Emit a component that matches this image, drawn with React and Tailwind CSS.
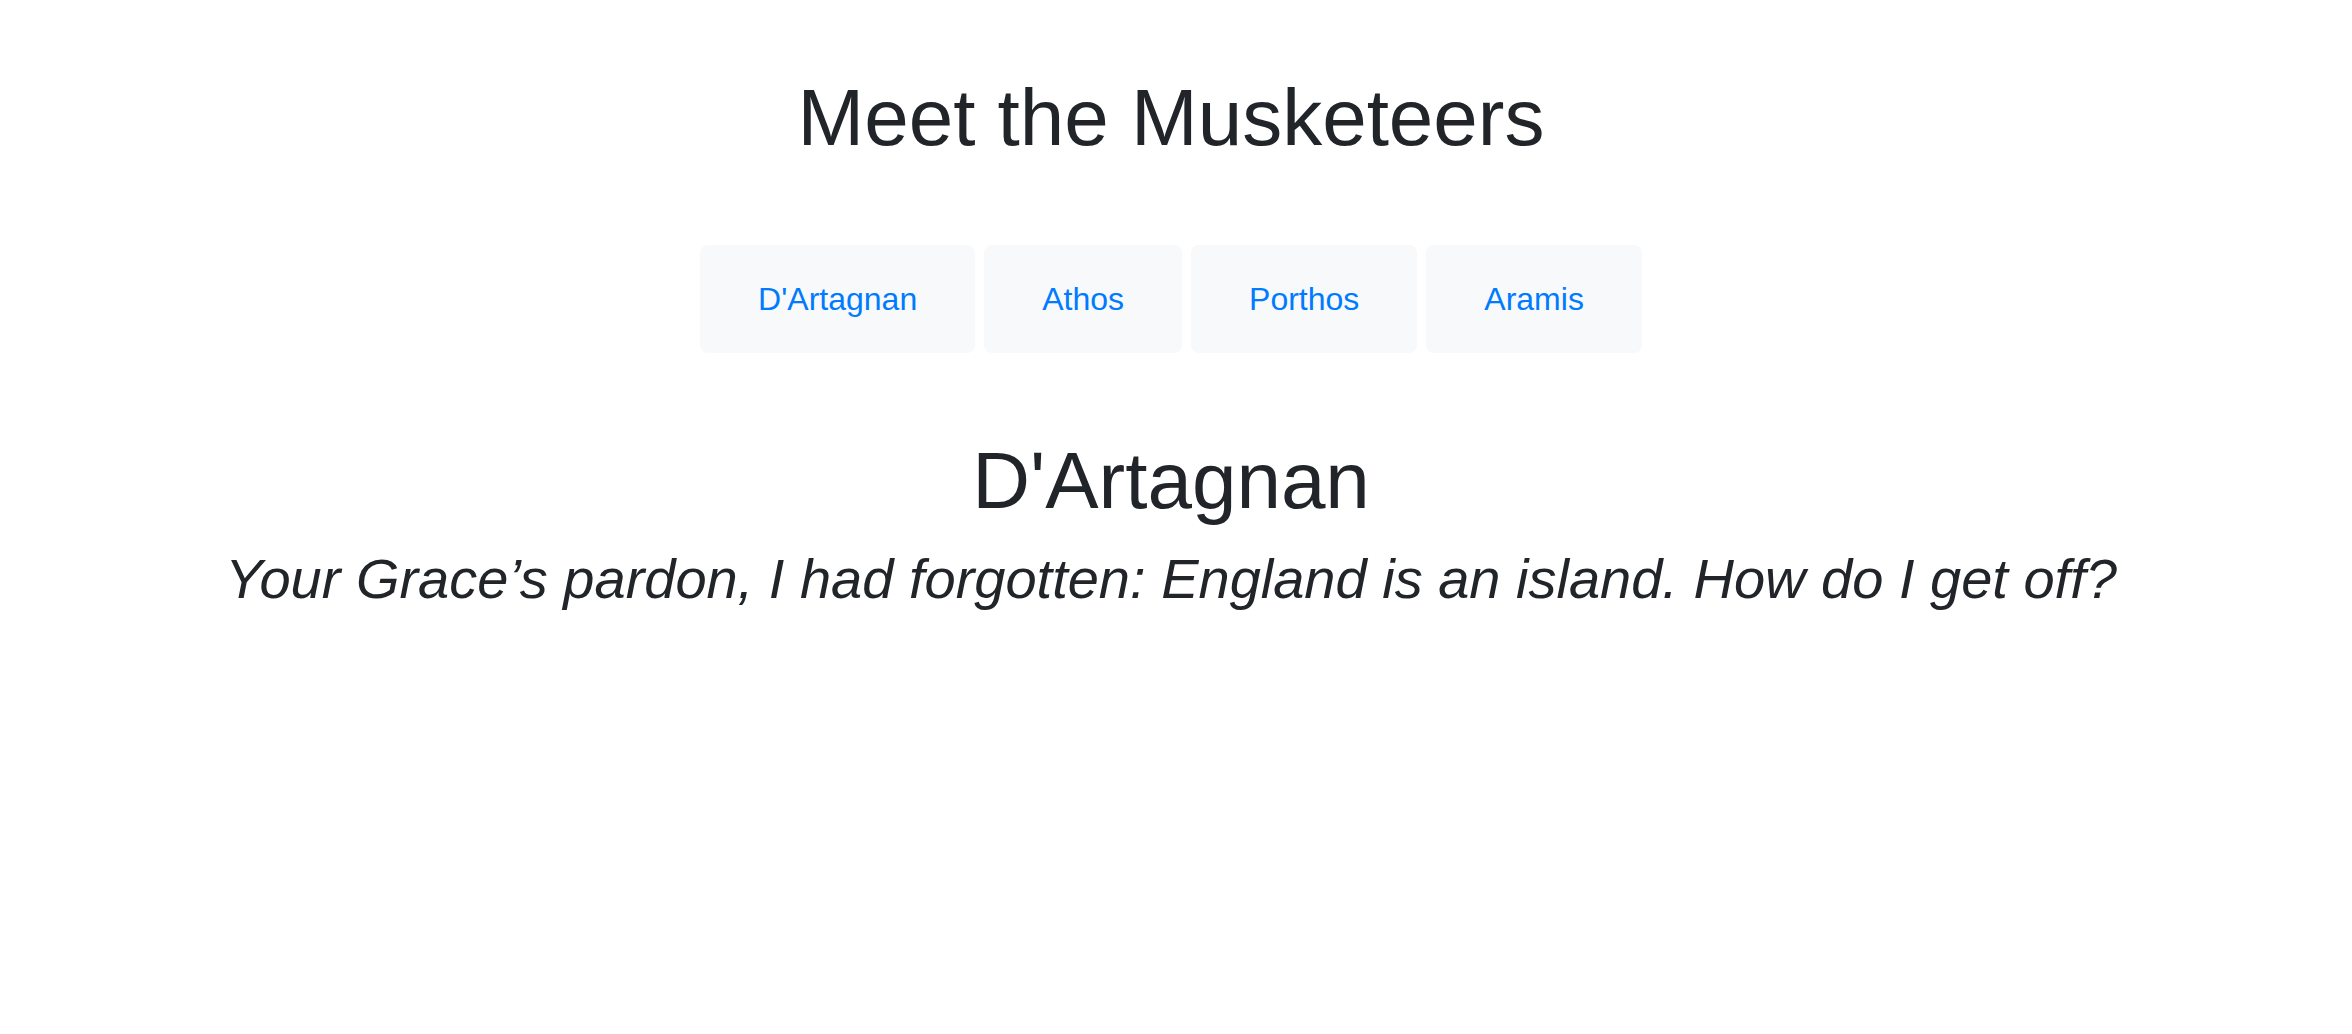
import { useState } from "react";

const musketeers = [
  { name: "D'Artagnan", quote: "Your Grace’s pardon, I had forgotten: England is an island. How do I get off?" },
  { name: "Athos", quote: "All for one, one for all." },
  { name: "Porthos", quote: "I fight because I fight." },
  { name: "Aramis", quote: "I am a musketeer only for a time." },
];

const App = () => {
  const [active, setActive] = useState(0);
  const current = musketeers[active];

  return (
    <div className="min-h-screen bg-white pr-[10px] text-center text-[#212529] font-['Liberation_Sans',Arial,sans-serif]">
      {/* Header */}
      <h1 className="pt-[70px] text-[80px] leading-[1.2] font-normal">Meet the Musketeers</h1>

      {/* Tabs */}
      <div className="mt-[79px] flex justify-center gap-[9px]">
        {musketeers.map((m, i) => (
          <button
            key={m.name}
            onClick={() => setActive(i)}
            className="h-[108px] px-[58px] flex items-center rounded-[8px] bg-[#f8f9fa] text-[32px] text-[#007bff] cursor-pointer"
          >
            {m.name}
          </button>
        ))}
      </div>

      {/* Selected */}
      <h2 className="mt-[80px] text-[80px] leading-[1.2] font-normal">{current.name}</h2>
      <p className="mt-[16px] text-[56px] leading-[1.2] italic">{current.quote}</p>
    </div>
  );
};

export default App;
